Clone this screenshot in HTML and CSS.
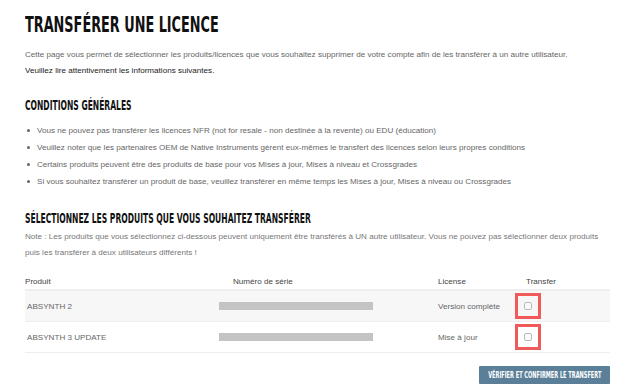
FILE: index.html
```html
<!DOCTYPE html>
<html lang="fr">
<head>
<meta charset="utf-8">
<link rel="stylesheet" href="styles.css">
</head>
<body>
<main class="page">
  <h1 class="title"><span class="cond">TRANSFÉRER UNE LICENCE</span></h1>
  <p class="intro">Cette page vous permet de sélectionner les produits/licences que vous souhaitez supprimer de votre compte afin de les transférer à un autre utilisateur.</p>
  <p class="intro strong">Veuillez lire attentivement les informations suivantes.</p>

  <h2 class="subtitle"><span class="cond">CONDITIONS GÉNÉRALES</span></h2>
  <ul class="rules">
    <li>Vous ne pouvez pas transférer les licences NFR (not for resale - non destinée à la revente) ou EDU (éducation)</li>
    <li>Veuillez noter que les partenaires OEM de Native Instruments gèrent eux-mêmes le transfert des licences selon leurs propres conditions</li>
    <li>Certains produits peuvent être des produits de base pour vos Mises à jour, Mises à niveau et Crossgrades</li>
    <li>Si vous souhaitez transférer un produit de base, veuillez transférer en même temps les Mises à jour, Mises à niveau ou Crossgrades</li>
  </ul>

  <h2 class="subtitle sel"><span class="cond">SÉLECTIONNEZ LES PRODUITS QUE VOUS SOUHAITEZ TRANSFÉRER</span></h2>
  <p class="note">Note : Les produits que vous sélectionnez ci-dessous peuvent uniquement être transférés à UN autre utilisateur. Vous ne pouvez pas sélectionner deux produits puis les transférer à deux utilisateurs différents !</p>

  <div class="table">
    <div class="row head">
      <div class="c-prod">Produit</div>
      <div class="c-serial">Numéro de série</div>
      <div class="c-lic">License</div>
      <div class="c-tr">Transfer</div>
    </div>
    <div class="row item alt">
      <div class="c-prod">ABSYNTH 2</div>
      <div class="c-serial"><span class="mask"></span></div>
      <div class="c-lic">Version complète</div>
      <div class="c-tr"><span class="hl"><span class="box"></span></span></div>
    </div>
    <div class="row item">
      <div class="c-prod">ABSYNTH 3 UPDATE</div>
      <div class="c-serial"><span class="mask"></span></div>
      <div class="c-lic">Mise à jour</div>
      <div class="c-tr"><span class="hl"><span class="box"></span></span></div>
    </div>
  </div>

  <div class="actions">
    <button class="btn"><span class="cond">VÉRIFIER ET CONFIRMER LE TRANSFERT</span></button>
  </div>
</main>
</body>
</html>
```
FILE: styles.css
```css
* { box-sizing: border-box; }
html, body { margin: 0; background: #fff; }
body { font-family: "Liberation Sans", Arial, sans-serif; color: #555; }
.page { padding: 0 20px 0 25px; width: 630px; }
.cond { display: inline-block; transform-origin: left center; font-family: "Liberation Sans Narrow", "DejaVu Sans Condensed", sans-serif; font-weight: bold; color: #111; white-space: nowrap; }
.title { margin: 0; padding-top: 13px; height: 47px; font-size: 21px; line-height: 24px; font-weight: bold; }
.title .cond { transform: scaleX(0.68); }
.intro { margin: 0; font-size: 8.1px; line-height: 16px; color: #666; white-space: nowrap; }
.intro.strong { color: #1a1a1a; }
.subtitle { margin: 18px 0 0; font-size: 13.5px; line-height: 16px; font-weight: bold; }
.subtitle .cond { transform: scaleX(0.625); }
.subtitle.sel { margin-top: 20px; }
.rules { margin: 8px 0 0; padding: 0 0 0 12px; list-style: none; }
.rules li { position: relative; font-size: 8.1px; line-height: 17px; color: #666; white-space: nowrap; }
.rules li::before { content: ""; position: absolute; left: -10px; top: 7px; width: 3px; height: 3px; background: #666; border-radius: 50%; }
.note { margin: 2px 0 0; font-size: 8.1px; line-height: 16px; color: #777; width: 585px; }
.table { margin-top: 12px; font-size: 8.1px; color: #555; }
.row { display: grid; grid-template-columns: 194px 219px 72px 100px; align-items: center; }
.row.head { height: 18px; border-bottom: 2px solid #eee; color: #444; }
.row.head .c-serial { padding-left: 14px; }
.row.head .c-tr { padding-left: 16px; }
.row.item { height: 31px; border-bottom: 1px solid #eee; color: #666; }
.row.alt { background: #f7f7f7; }
.row.item .c-prod { padding-left: 2px; }
.mask { display: block; width: 154px; height: 8px; background: #c4c4c4; }
.row.item .c-lic { white-space: nowrap; }
.row.item .c-tr { padding-left: 5px; display: flex; }
.hl { display: flex; align-items: center; justify-content: center; width: 26px; height: 26px; border: 3px solid #f15a5a; }
.box { width: 8px; height: 8px; border: 1px solid #bbb; border-radius: 2px; background: #fafafa; }
.actions { display: flex; justify-content: flex-end; margin-top: 13px; }
.btn { height: 18px; width: 131px; padding: 0; border: 0; border-radius: 1px; background: #5b7f98; display: flex; align-items: center; justify-content: center; font-size: 8.5px; }
.btn .cond { color: #fff; transform: scaleX(0.66); transform-origin: center; margin: 0 -40px; }
```
